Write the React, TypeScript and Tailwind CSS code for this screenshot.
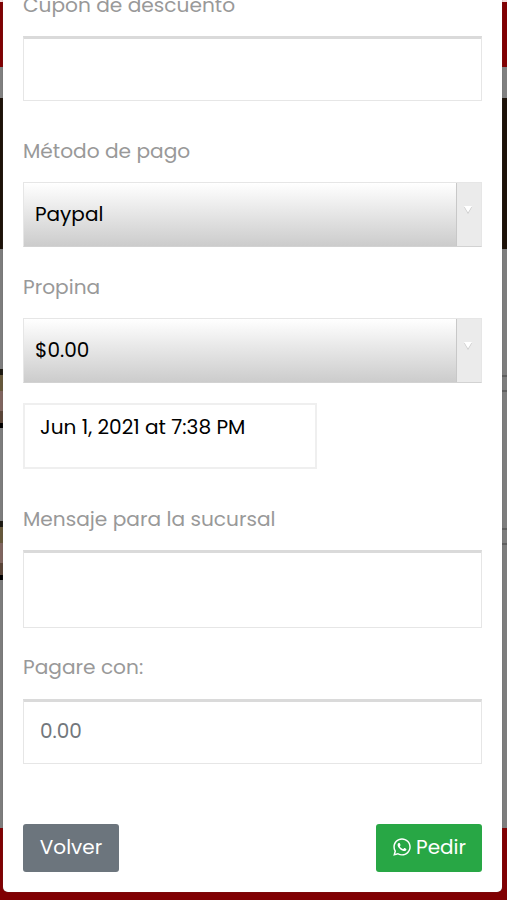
import React, { useState } from "react";
import { FaWhatsapp } from "react-icons/fa";

const backdrop = [
  { id: "edge", style: "h-[2px] bg-[#f3d9d9]" },
  { id: "navbar", style: "h-[65px] bg-[#800002]" },
  { id: "toolbar", style: "h-[31px] bg-[#808080]" },
  { id: "banner", style: "h-[151px] bg-[#1d1209]" },
  { id: "list", style: "h-[579px] bg-[#7d7d7d]" },
  { id: "footer", style: "h-[72px] bg-[#800002]" },
];

const Backdrop = () => (
  <div className="[grid-area:1/1] flex flex-col">
    {backdrop.map((band) =>
      band.id === "list" ? (
        <div key={band.id} className={`${band.style} flex justify-between`}>
          <div className="w-[3px] flex flex-col pt-[120px] gap-[93px]">
            <Thumb />
            <Thumb />
          </div>
          <div className="w-[5px] flex flex-col pt-[126px] gap-[136px]">
            <div className="h-[17px] border-y-2 border-[#5f5f5f]" />
            <div className="h-[17px] border-y-2 border-[#5f5f5f]" />
          </div>
        </div>
      ) : (
        <div key={band.id} className={band.style} />
      )
    )}
  </div>
);

const Thumb = () => (
  <div className="h-[59px] flex flex-col">
    <div className="h-[6px] bg-[#1d1a12]" />
    <div className="h-[16px] bg-[#66583b]" />
    <div className="h-[20px] bg-[#80655f]" />
    <div className="h-[12px] bg-[#5a4538]" />
    <div className="h-[5px] bg-black" />
  </div>
);

const Label = ({ text, className }: { text: string; className: string }) => (
  <label
    className={`block h-[30px] leading-[30px] text-[20.15px] text-[#999] whitespace-nowrap ${className}`}
  >
    <span>{text}</span>
  </label>
);

const SelectBox = ({ value, className }: { value: string; className: string }) => (
  <div
    className={`flex h-[65px] border border-[#e6e6e6] border-b-[#d2d2d2] cursor-pointer ${className}`}
  >
    <div className="flex-1 flex items-center pl-[11px] pb-px text-black bg-linear-to-b from-white to-[#cccccc]">
      <span>{value}</span>
    </div>
    <div className="w-[25px] border-l border-[#c8c8c8] bg-[#ebebeb] flex justify-center pt-[23px]">
      <svg width="10" height="9" viewBox="0 0 10 9" className="mr-[3px]">
        <path d="M1 1h8L5 8z" fill="#c9c9c9" />
        <path d="M1 0h8L5 6.5z" fill="#fff" />
      </svg>
    </div>
  </div>
);

const App = () => {
  const [formValue, setFormValue] = useState({
    coupon: "",
    message: "",
    cash: "",
  });

  const onChange = (
    e: React.ChangeEvent<HTMLInputElement | HTMLTextAreaElement>
  ) => {
    setFormValue({ ...formValue, [e.target.name]: e.target.value });
  };

  return (
    <div className="grid w-full h-[900px] overflow-hidden text-[20px] font-[Poppins,Inter,'Open_Sans',sans-serif]">
      <Backdrop />
      <div className="[grid-area:1/1] z-10 h-[892px] ml-[3px] mr-[5px] px-5 flex flex-col bg-white rounded-b-[5px] shadow-[0_0_1px_#555]">
        <Label text="Cupón de descuento" className="mt-[-10px]" />
        <input
          name="coupon"
          value={formValue.coupon}
          onChange={onChange}
          className="mt-[16px] h-[65px] w-full px-4 border border-[#e6e6e6] border-t-[3px] border-t-[#dadada] outline-none"
        />
        <Label text="Método de pago" className="mt-[35px]" />
        <SelectBox value="Paypal" className="mt-[16px]" />
        <Label text="Propina" className="mt-[25px]" />
        <SelectBox value="$0.00" className="mt-[16px]" />
        <div className="mt-[20px] h-[66px] w-[294px] pl-[15px] pt-[7px] leading-[30px] text-[20.1px] border-2 border-[#efefef] text-black whitespace-nowrap">
          <span>Jun 1, 2021 at 7:38 PM</span>
        </div>
        <Label text="Mensaje para la sucursal" className="mt-[35px]" />
        <textarea
          name="message"
          value={formValue.message}
          onChange={onChange}
          className="mt-[16px] h-[78px] shrink-0 w-full px-4 border border-[#e6e6e6] border-t-[3px] border-t-[#dadada] outline-none resize-none"
        />
        <Label text="Pagare con:" className="mt-[24px]" />
        <input
          name="cash"
          value={formValue.cash}
          onChange={onChange}
          placeholder="0.00"
          className="mt-[17px] h-[65px] w-full px-4 pb-[3px] border border-[#e6e6e6] border-t-[3px] border-t-[#dadada] placeholder:text-[#72777c] outline-none"
        />
        <div className="mt-[60px] flex justify-between text-white">
          <button className="w-[96px] h-[48px] pb-[2px] rounded-[3px] bg-[#6c757d]">
            Volver
          </button>
          <button className="w-[106px] h-[48px] pb-[2px] rounded-[3px] bg-[#28a745] flex items-center justify-center gap-[4px]">
            <FaWhatsapp className="w-[20px] h-[20px]" />
            <span>Pedir</span>
          </button>
        </div>
      </div>
    </div>
  );
};

export default App;
